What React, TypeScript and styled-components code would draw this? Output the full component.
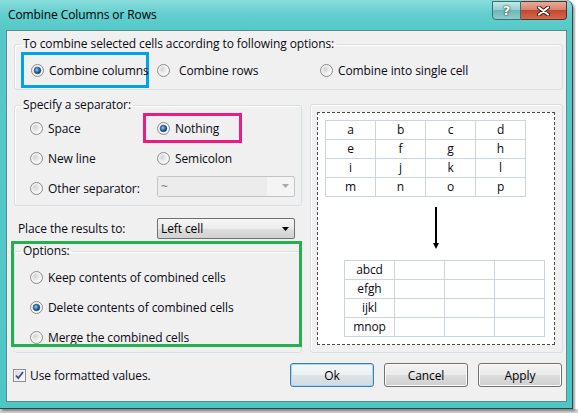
import React, { useId } from "react";
import styled, { createGlobalStyle } from "styled-components";

const FONT = `"Open Sans", "Noto Sans", "Liberation Sans", sans-serif`;

const GlobalStyle = createGlobalStyle`
  html, body {
    margin: 0;
    padding: 0;
  }
  body {
    background: #ffffff;
    font-family: ${FONT};
    font-size: 12px;
    letter-spacing: -0.1px;
    color: #0a0a14;
  }
`;

const Desktop = styled.div`
  width: 578px;
  height: 413px;
  overflow: hidden;
  background: linear-gradient(180deg, #ffffff 0, #ffffff 409px, #cfcfcf 409px);
`;

const Window = styled.div`
  box-sizing: border-box;
  width: 573px;
  height: 409px;
  display: flex;
  flex-direction: column;
  padding: 0 5px 6px 6px;
  border-right: 1px solid #2c4646;
  border-bottom: 1px solid #2c4646;
  border-top-right-radius: 7px;
  background: linear-gradient(180deg, #8adddd 0px, #62cece 14px, #55c9c9 30px, #4fc6c6 100%);
  box-shadow: 2px 2px 2px rgba(0, 0, 0, 0.35);
`;

const TitleBar = styled.div`
  height: 30px;
  display: flex;
  align-items: flex-start;
`;

const Title = styled.div`
  padding: 7px 0 0 2px;
  line-height: 16px;
  color: #000;
`;

const CaptionButtons = styled.div`
  margin-left: auto;
  margin-top: 1px;
  display: flex;
`;

const CaptionButton = styled.div<{ $close?: boolean }>`
  box-sizing: border-box;
  width: ${(p) => (p.$close ? 46 : 29)}px;
  height: 19px;
  display: flex;
  align-items: center;
  justify-content: center;
  border: 1px solid ${(p) => (p.$close ? "#6b2a1f" : "#3d6e70")};
  border-left: ${(p) => (p.$close ? "none" : undefined)};
  border-radius: ${(p) => (p.$close ? "0 0 4px 0" : "0 0 0 4px")};
  background: ${(p) =>
    p.$close
      ? "linear-gradient(180deg, #e9aa9a 0%, #d9836f 45%, #c4482f 50%, #cf6a4c 100%)"
      : "linear-gradient(180deg, #c4e8e8 0%, #94cfcf 45%, #6fb6b6 50%, #8ccdcd 100%)"};
  color: #fff;
  font-family: "DejaVu Sans", sans-serif;
  font-weight: bold;
  font-size: 13px;
  text-shadow: 0 0 2px #1d3434, 0 0 1px #1d3434;
`;

const Client = styled.div`
  flex: 1;
  min-height: 0;
  display: flex;
  flex-direction: column;
  background: #f0f0f0;
  border: 1px solid #5f8a8c;
  padding: 5px 3px 0 7px;
`;

const Group = styled.fieldset`
  margin: 0;
  padding: 0;
  min-width: 0;
  border: 1px solid #d5dfe5;
  border-radius: 3px;
  box-shadow: inset 1px 1px 0 #ffffff;
`;

const Legend = styled.legend`
  margin-left: 6px;
  padding: 0 2px;
  line-height: 16px;
`;

const ModeRow = styled.div`
  display: flex;
  align-items: center;
  padding: 0 0 1px 6px;
`;

const Highlight = styled.div<{ $color: string; $w: number; $pl: number }>`
  box-sizing: border-box;
  width: ${(p) => p.$w}px;
  height: ${(p) => (p.$color === "#00a2e8" ? 36 : 30)}px;
  display: flex;
  align-items: center;
  padding-left: ${(p) => p.$pl}px;
  border: 3px solid ${(p) => p.$color};
`;

const RadioLabel = styled.label<{ $w?: number; $ml?: number; $gap?: number }>`
  display: flex;
  align-items: center;
  flex-shrink: 0;
  gap: ${(p) => p.$gap ?? 5}px;
  white-space: nowrap;
  width: ${(p) => (p.$w ? `${p.$w}px` : "auto")};
  margin-left: ${(p) => p.$ml ?? 0}px;
`;

const Middle = styled.div`
  display: flex;
  gap: 8px;
  margin-top: 7px;
`;

const LeftColumn = styled.div`
  width: 288px;
  display: flex;
  flex-direction: column;
`;

const SeparatorGrid = styled.div`
  display: grid;
  grid-template-columns: 113px 1fr;
  grid-auto-rows: 30px;
  padding: 0 0 2px 15px;
`;

const Cell = styled.div<{ $pl?: number }>`
  display: flex;
  align-items: center;
  padding-left: ${(p) => p.$pl ?? 0}px;
`;

const PlaceRow = styled.div`
  display: flex;
  align-items: center;
  height: 21px;
  margin-top: 12px;
`;

const PlaceLabel = styled.div`
  box-sizing: border-box;
  width: 143px;
  padding-left: 4px;
`;

const Select = styled.div<{ $disabled?: boolean; $mt?: number }>`
  box-sizing: border-box;
  width: 138px;
  height: 21px;
  margin-top: ${(p) => p.$mt ?? 0}px;
  display: flex;
  align-items: center;
  border: 1px solid ${(p) => (p.$disabled ? "#c4c4c4" : "#707070")};
  border-radius: 2px;
  background: ${(p) =>
    p.$disabled
      ? "#f4f4f4"
      : "linear-gradient(180deg, #f6f6f6 0%, #ececec 50%, #dedede 51%, #d2d2d2 100%)"};
  color: ${(p) => (p.$disabled ? "#7a7a7a" : "#000")};
`;

const SelectField = styled.div<{ $disabled?: boolean }>`
  flex: 1;
  height: 100%;
  display: flex;
  align-items: center;
  padding-left: 3px;
  margin-right: ${(p) => (p.$disabled ? 20 : 0)}px;
  background: ${(p) => (p.$disabled ? "#ececec" : "transparent")};
`;

const SelectArrow = styled.svg`
  position: relative;
  right: 5px;
  flex-shrink: 0;
`;

const OptionsWrap = styled.div`
  position: relative;
  margin-top: 4px;
`;

const OptionsList = styled.div`
  display: grid;
  grid-auto-rows: 30px;
  align-items: center;
  padding: 3px 0 0 15px;
`;

const GreenMark = styled.div`
  position: absolute;
  top: -2px;
  left: -3px;
  width: 291px;
  height: 106px;
  box-sizing: border-box;
  border: 3px solid #22b14c;
  pointer-events: none;
`;

const PreviewPanel = styled.div`
  flex: 1;
  margin-top: 7px;
  display: flex;
  border: 1px solid #d5dfe5;
  border-radius: 3px;
  box-shadow: inset 1px 1px 0 #ffffff;
  padding: 7px 7px 7px 6px;
`;

const Preview = styled.div`
  flex: 1;
  display: flex;
  flex-direction: column;
  align-items: flex-start;
  border: 1px dashed #4a4a4a;
  background: #ffffff;
  padding: 7px 0 0 7px;
`;

const Sheet = styled.div<{ $ml?: number; $mt?: number }>`
  display: grid;
  grid-template-columns: repeat(4, 49px);
  grid-auto-rows: 18px;
  gap: 1px;
  padding: 1px;
  margin-left: ${(p) => p.$ml ?? 0}px;
  margin-top: ${(p) => p.$mt ?? 0}px;
  background: #cbd5e1;
`;

const SheetCell = styled.div`
  display: flex;
  align-items: center;
  justify-content: center;
  background: #ffffff;
  line-height: 1;
`;

const DownArrow = styled.svg`
  margin: 10px 0 0 107px;
`;

const Footer = styled.div`
  display: flex;
  align-items: center;
  height: 24px;
  margin: 10px 1px 0 -1px;
`;

const CheckLabel = styled.label`
  display: flex;
  align-items: center;
  gap: 4px;
`;

const ButtonRow = styled.div`
  margin-left: auto;
  display: flex;
  gap: 10px;
`;

const Button = styled.button<{ $default?: boolean }>`
  box-sizing: border-box;
  width: 84px;
  height: 24px;
  padding: 0;
  font-family: ${FONT};
  font-size: 12px;
  letter-spacing: -0.1px;
  color: #000;
  border-radius: 3px;
  border: 1px solid ${(p) => (p.$default ? "#3c7fb1" : "#707070")};
  box-shadow: inset 0 0 0 1px ${(p) => (p.$default ? "#a9d8f4" : "#fbfbfb")};
  background: ${(p) =>
    p.$default
      ? "linear-gradient(180deg, #f4f8fa 0%, #eaf0f3 50%, #dce4e8 51%, #d2dadf 100%)"
      : "linear-gradient(180deg, #f2f2f2 0%, #ebebeb 50%, #dddddd 51%, #cfcfcf 100%)"};
`;

const RadioIcon: React.FC<{ checked?: boolean }> = ({ checked }) => {
  const id = useId().replace(/:/g, "");
  return (
    <svg width="13" height="13" viewBox="0 0 13 13">
      <defs>
        <radialGradient id={`r${id}`} cx="0.35" cy="0.35" r="0.7">
          <stop offset="0" stopColor="#d4d4d4" />
          <stop offset="1" stopColor="#fbfbfb" />
        </radialGradient>
        <radialGradient id={`d${id}`} cx="0.4" cy="0.4" r="0.6">
          <stop offset="0" stopColor="#8fd0fa" />
          <stop offset="0.6" stopColor="#2a6fb0" />
          <stop offset="1" stopColor="#0e3a66" />
        </radialGradient>
      </defs>
      <circle cx="6.5" cy="6.5" r="6" fill="#f4f4f4" stroke="#8a8a8a" />
      <circle cx="6.5" cy="6.5" r="4.5" fill={`url(#r${id})`} />
      {checked && <circle cx="6.5" cy="6.5" r="3.3" fill={`url(#d${id})`} stroke="#163e66" strokeWidth="0.6" />}
    </svg>
  );
};

const Radio: React.FC<{
  label: string;
  checked?: boolean;
  w?: number;
  ml?: number;
  gap?: number;
}> = ({ label, checked, w, ml, gap }) => (
  <RadioLabel $w={w} $ml={ml} $gap={gap}>
    <RadioIcon checked={checked} />
    <span>{label}</span>
  </RadioLabel>
);

const CheckIcon: React.FC = () => (
  <svg width="13" height="13" viewBox="0 0 13 13">
    <defs>
      <linearGradient id="cbg" x1="0" y1="0" x2="1" y2="1">
        <stop offset="0" stopColor="#d8d8d8" />
        <stop offset="1" stopColor="#fafafa" />
      </linearGradient>
    </defs>
    <rect x="0.5" y="0.5" width="12" height="12" fill="#f4f4f4" stroke="#8e8f8f" />
    <rect x="2" y="2" width="9" height="9" fill="url(#cbg)" />
    <path d="M3 6.5 L5.3 9 L10 3" fill="none" stroke="#3a4f8c" strokeWidth="1.8" />
  </svg>
);

const ArrowIcon: React.FC<{ color: string }> = ({ color }) => (
  <SelectArrow width="7" height="4" viewBox="0 0 7 4">
    <path d="M0 0 H7 L3.5 4 Z" fill={color} />
  </SelectArrow>
);

const letters = ["a", "b", "c", "d", "e", "f", "g", "h", "i", "j", "k", "l", "m", "n", "o", "p"];
const merged = ["abcd", "efgh", "ijkl", "mnop"];

export default function App() {
  return (
    <Desktop>
      <GlobalStyle />
      <Window>
        <TitleBar>
          <Title>Combine Columns or Rows</Title>
          <CaptionButtons>
            <CaptionButton>?</CaptionButton>
            <CaptionButton $close>
              <svg width="13" height="10" viewBox="0 0 13 10">
                <path d="M2 1.5 L11 8.5 M11 1.5 L2 8.5" stroke="#3a1a14" strokeWidth="4" strokeLinecap="round" />
                <path d="M2 1.5 L11 8.5 M11 1.5 L2 8.5" stroke="#ffffff" strokeWidth="2.2" strokeLinecap="round" />
              </svg>
            </CaptionButton>
          </CaptionButtons>
        </TitleBar>
        <Client>
          <Group>
            <Legend>To combine selected cells according to following options:</Legend>
            <ModeRow>
              <Highlight $color="#00a2e8" $w={128} $pl={7}>
                <Radio label="Combine columns" checked />
              </Highlight>
              <Radio label="Combine rows" w={163} ml={8} gap={9} />
              <Radio label="Combine into single cell" />
            </ModeRow>
          </Group>

          <Middle>
            <LeftColumn>
              <Group>
                <Legend>Specify a separator:</Legend>
                <SeparatorGrid>
                  <Cell>
                    <Radio label="Space" />
                  </Cell>
                  <Cell>
                    <Highlight $color="#ec1c80" $w={99} $pl={11}>
                      <Radio label="Nothing" checked />
                    </Highlight>
                  </Cell>
                  <Cell>
                    <Radio label="New line" />
                  </Cell>
                  <Cell $pl={14}>
                    <Radio label="Semicolon" />
                  </Cell>
                  <Cell>
                    <Radio label="Other separator:" />
                  </Cell>
                  <Cell $pl={14}>
                    <Select $disabled $mt={-4}>
                      <SelectField $disabled>~</SelectField>
                      <ArrowIcon color="#a8a8a8" />
                    </Select>
                  </Cell>
                </SeparatorGrid>
              </Group>

              <PlaceRow>
                <PlaceLabel>Place the results to:</PlaceLabel>
                <Select>
                  <SelectField>Left cell</SelectField>
                  <ArrowIcon color="#000000" />
                </Select>
              </PlaceRow>

              <OptionsWrap>
                <Group>
                  <Legend>Options:</Legend>
                  <OptionsList>
                    <Radio label="Keep contents of combined cells" />
                    <Radio label="Delete contents of combined cells" checked />
                    <Radio label="Merge the combined cells" />
                  </OptionsList>
                </Group>
                <GreenMark />
              </OptionsWrap>
            </LeftColumn>

            <PreviewPanel>
              <Preview>
                <Sheet>
                  {letters.map((l) => (
                    <SheetCell key={l}>{l}</SheetCell>
                  ))}
                </Sheet>
                <DownArrow width="8" height="42" viewBox="0 0 8 42">
                  <path d="M4 0 V38" stroke="#000" strokeWidth="2" />
                  <path d="M1 36 H7 L4 42 Z" fill="#000" />
                </DownArrow>
                <Sheet $ml={19} $mt={11}>
                  {merged.map((m) => (
                    <React.Fragment key={m}>
                      <SheetCell>{m}</SheetCell>
                      <SheetCell />
                      <SheetCell />
                      <SheetCell />
                    </React.Fragment>
                  ))}
                </Sheet>
              </Preview>
            </PreviewPanel>
          </Middle>

          <Footer>
            <CheckLabel>
              <CheckIcon />
              <span>Use formatted values.</span>
            </CheckLabel>
            <ButtonRow>
              <Button $default>Ok</Button>
              <Button>Cancel</Button>
              <Button>Apply</Button>
            </ButtonRow>
          </Footer>
        </Client>
      </Window>
    </Desktop>
  );
}
